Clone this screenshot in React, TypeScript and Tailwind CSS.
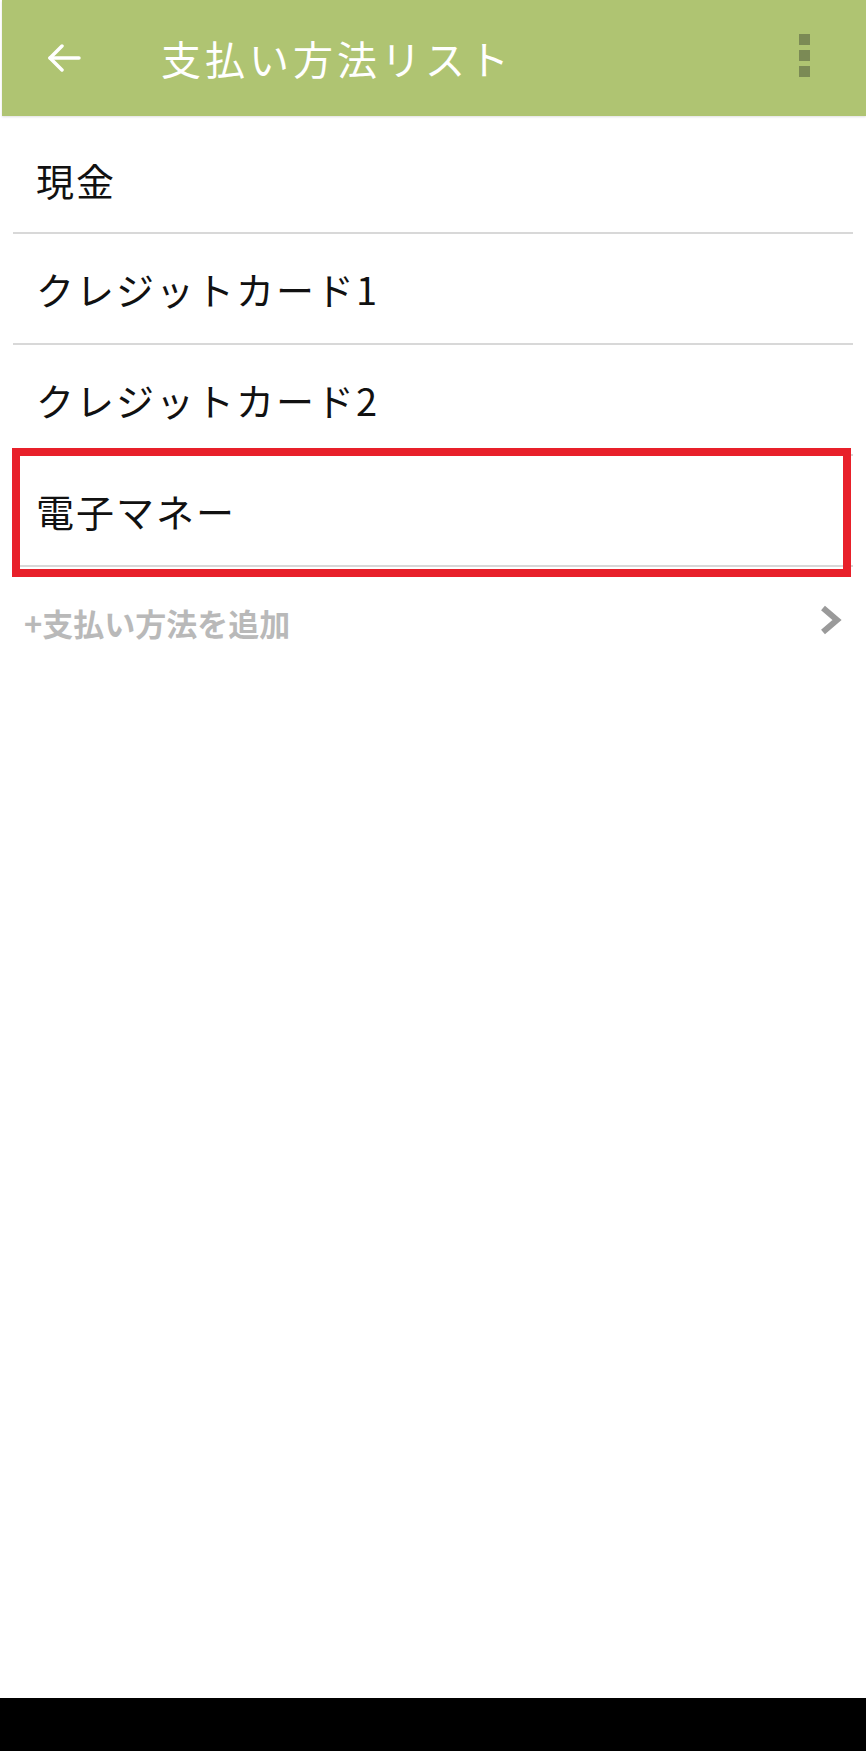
import React from 'react';

const methods = ['現金', 'クレジットカード1', 'クレジットカード2', '電子マネー'];

const BackArrow = () => (
  <svg width="34" height="28" viewBox="0 0 34 28" fill="none" stroke="white" strokeWidth="3.5" strokeLinecap="round" strokeLinejoin="round">
    <path d="M3 14H32" />
    <path d="M15 2L3 14L15 26" />
  </svg>
);

const Chevron = () => (
  <svg width="22" height="30" viewBox="0 0 22 30" fill="none" stroke="#9a9a9a" strokeWidth="6" strokeLinejoin="miter">
    <path d="M3 3L17 15L3 27" />
  </svg>
);

export default function App() {
  return (
    <div
      className="relative w-[866px] h-[1751px] flex flex-col bg-white"
      style={{ fontFamily: '"Noto Sans CJK JP", "Noto Sans", sans-serif' }}
    >
      <header className="ml-[2px] h-[116px] shrink-0 flex items-center bg-[#afc472] shadow-[0_1px_2px_rgba(0,0,0,0.12)]">
        <div className="ml-[45px] flex items-center">
          <BackArrow />
        </div>
        <h1 className="ml-[80px] text-[40px] leading-none text-white tracking-[4px] font-normal">支払い方法リスト</h1>
        <div className="ml-auto mr-[56px] flex flex-col gap-[5px] -mt-[6px]">
          <span className="block w-[11px] h-[11px] bg-[#7b8a55]" />
          <span className="block w-[11px] h-[11px] bg-[#7b8a55]" />
          <span className="block w-[11px] h-[11px] bg-[#7b8a55]" />
        </div>
      </header>

      <ul className="flex flex-col">
        {methods.map((m, i) => (
          <li
            key={m}
            className={`mx-[13px] flex items-center border-b-2 border-[#d8d8d8] ${i === 0 ? 'h-[118px] pt-[12px]' : 'h-[111px]'}`}
          >
            <span className="pl-[23px] text-[38px] leading-none tracking-[2px] text-[#111111]">{m}</span>
          </li>
        ))}
      </ul>

      <div className="h-[116px] flex items-start justify-between pt-[40px] pl-[24px] pr-[24px]">
        <span className="text-[31px] leading-none font-bold text-[#b9b9b9]">+支払い方法を追加</span>
        <div className="-mt-[2px]">
          <Chevron />
        </div>
      </div>

      <div className="flex-1" />
      <div className="h-[53px] shrink-0 bg-black" />

      <div className="absolute left-[12px] top-[448px] w-[839px] h-[129px] border-8 border-[#e8202a] pointer-events-none" />
    </div>
  );
}
